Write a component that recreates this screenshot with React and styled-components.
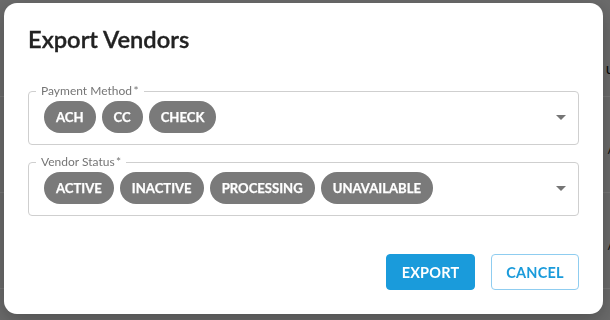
import React from "react";
import styled, { createGlobalStyle } from "styled-components";

const Global = createGlobalStyle`
  html, body { margin: 0; padding: 0; }
  body { width: 610px; height: 320px; overflow: hidden; background: #ffffff; font-family: Lato, "Noto Sans", sans-serif; }
`;

const Page = styled.div`
  width: 610px;
  height: 320px;
  background: #d6d6d6;
  display: flex;
  flex-direction: column;
  padding-top: 1px;
  box-sizing: border-box;
`;

const PageRow = styled.div`
  height: 96px;
  border-bottom: 1px solid #eeeeee;
  display: flex;
  align-items: ${(p) => p.$align || "center"};
  justify-content: flex-end;
  color: #111;
  font-size: 15px;
  box-sizing: border-box;
  flex-shrink: 0;
`;

const RowText = styled.span`
  margin-right: -4px;
  transform: translateY(${(p) => p.$dy || 0}px);
`;

const Backdrop = styled.div`
  position: fixed;
  inset: 0;
  background: rgba(0, 0, 0, 0.5);
`;

const Dialog = styled.div`
  position: fixed;
  left: 4px;
  top: 3px;
  width: 599px;
  height: 311px;
  background: #ffffff;
  border-radius: 13px;
  box-shadow: 0 6px 20px rgba(0, 0, 0, 0.25);
  box-sizing: border-box;
  padding: 20px 24px 24px 24px;
  display: flex;
  flex-direction: column;
`;

const Title = styled.h2`
  margin: 0;
  font-family: Lato, sans-serif;
  font-size: 23.7px;
  line-height: 32px;
  font-weight: 600;
  -webkit-text-stroke: 0.35px #222222;
  color: #222222;
`;

const Fields = styled.div`
  display: flex;
  flex-direction: column;
  gap: 11px;
  margin-top: 30px;
`;

const Field = styled.fieldset`
  margin: 0;
  border: 1px solid #cfcfcf;
  border-radius: 4px;
  padding: 4px 12px 11px 15px;
  min-width: 0;
  display: flex;
  align-items: center;
`;

const Legend = styled.legend`
  font-family: Lato, sans-serif;
  font-size: 12px;
  line-height: 12px;
  color: #757575;
  padding: 0 5px;
  margin-left: -8px;
`;

const ChipList = styled.div`
  flex: 1;
  display: flex;
  flex-wrap: wrap;
  gap: 6px;
`;

const Chip = styled.span`
  display: inline-flex;
  align-items: center;
  height: 32px;
  padding: 0 12px;
  border-radius: 16px;
  background: #7a7a7a;
  color: #ffffff;
  font-family: Lato, sans-serif;
  font-weight: 700;
  font-size: 13.1px;
  -webkit-text-stroke: 0.25px #ffffff;
`;

const Arrow = styled.svg`
  width: 10px;
  height: 5px;
  flex-shrink: 0;
`;

const Actions = styled.div`
  margin-top: auto;
  display: flex;
  justify-content: flex-end;
  gap: 16px;
`;

const Button = styled.button`
  height: 36px;
  width: ${(p) => (p.$primary ? "89px" : "88px")};
  padding: 0;
  border-radius: 4px;
  font-family: Lato, sans-serif;
  font-weight: 700;
  font-size: 14.5px;
  letter-spacing: 0.2px;
  cursor: pointer;
  box-sizing: border-box;
  border: 1px solid ${(p) => (p.$primary ? "#1a9bdb" : "#8fcdf0")};
  background: ${(p) => (p.$primary ? "#1a9bdb" : "#ffffff")};
  color: ${(p) => (p.$primary ? "#ffffff" : "#1a9bdb")};
`;

const DownArrow = () => (
  <Arrow viewBox="0 0 10 5">
    <path d="M0 0 L10 0 L5 5 Z" fill="#757575" />
  </Arrow>
);

const fields = [
  { label: "Payment Method", chips: ["ACH", "CC", "CHECK"] },
  { label: "Vendor Status", chips: ["ACTIVE", "INACTIVE", "PROCESSING", "UNAVAILABLE"] },
];

export default function App() {
  return (
    <>
      <Global />
      <Page>
        <PageRow $align="flex-start"><RowText $dy={58}>u</RowText></PageRow>
        <PageRow><RowText $dy={2}>/</RowText></PageRow>
        <PageRow><RowText $dy={2}>/</RowText></PageRow>
      </Page>
      <Backdrop />
      <Dialog>
        <Title>Export Vendors</Title>
        <Fields>
          {fields.map((f) => (
            <Field key={f.label}>
              <Legend>{f.label}&thinsp;*</Legend>
              <ChipList>
                {f.chips.map((c) => (
                  <Chip key={c}>{c}</Chip>
                ))}
              </ChipList>
              <DownArrow />
            </Field>
          ))}
        </Fields>
        <Actions>
          <Button $primary>EXPORT</Button>
          <Button>CANCEL</Button>
        </Actions>
      </Dialog>
    </>
  );
}
